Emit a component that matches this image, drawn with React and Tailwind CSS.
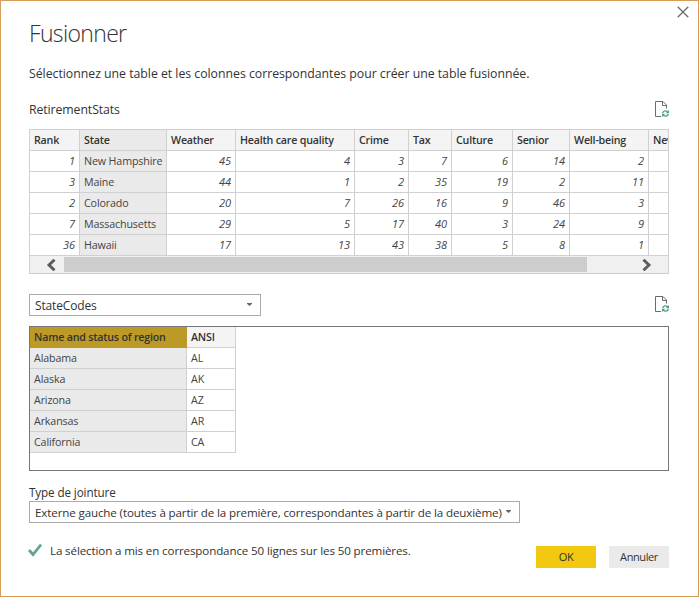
const stats = [
  ['1', 'New Hampshire', '45', '4', '3', '7', '6', '14', '2', ''],
  ['3', 'Maine', '44', '1', '2', '35', '19', '2', '11', ''],
  ['2', 'Colorado', '20', '7', '26', '16', '9', '46', '3', ''],
  ['7', 'Massachusetts', '29', '5', '17', '40', '3', '24', '9', ''],
  ['36', 'Hawaii', '17', '13', '43', '38', '5', '8', '1', ''],
];

const columns = [
  { name: 'Rank', width: 'w-[50px]' },
  { name: 'State', width: 'w-[87px]', selected: true },
  { name: 'Weather', width: 'w-[69px]' },
  { name: 'Health care quality', width: 'w-[119px]' },
  { name: 'Crime', width: 'w-[54px]' },
  { name: 'Tax', width: 'w-[43px]' },
  { name: 'Culture', width: 'w-[61px]' },
  { name: 'Senior', width: 'w-[57px]' },
  { name: 'Well-being', width: 'w-[79px]' },
  { name: 'New', width: 'w-[40px]' },
];

const codes = [
  ['Alabama', 'AL'],
  ['Alaska', 'AK'],
  ['Arizona', 'AZ'],
  ['Arkansas', 'AR'],
  ['California', 'CA'],
];

const cell = 'h-[21px] shrink-0 border-r border-b border-[#d0d0d0] px-1 leading-[20px] whitespace-nowrap';
const heading = 'text-[10.7px] font-semibold tracking-[-0.21px] text-[#333]';
const label = 'text-[10.7px] tracking-[-0.13px]';

function RefreshFileIcon() {
  return (
    <svg width="15" height="17" viewBox="0 0 15 17" fill="none" className="block">
      <path d="M6 15.5H.5V.5H8l3.500 3.500v3.500M7.500.5v4h4" stroke="#6b6b6b" />
      <path d="M7.700 12c.5-2.300 3.600-2.900 5-1M13.300 13c-.5 2.300-3.600 2.900-5 1" stroke="#52a184" strokeWidth="1.400" />
      <path d="M14 9v3.200h-3.200zM7 16v-3.200h3.200z" fill="#52a184" />
    </svg>
  );
}

function Caret() {
  return (
    <svg width="5" height="3" viewBox="0 0 5 3" className="mb-px block">
      <path d="M0 0h5v.8L2.500 3 0 .8z" fill="#666" />
    </svg>
  );
}

export default function App() {
  return (
    <div className="flex h-[597px] w-[699px] flex-col overflow-hidden border border-[#d59c5b] bg-white font-['Open_Sans',sans-serif] text-[#333]">
      <div className="flex h-[128px] shrink-0 flex-col pl-7">
        <div className="flex h-[57px] items-start justify-between">
          <h1 className="mt-[14px] text-[23px] leading-[36px] font-light tracking-[-0.65px]">Fusionner</h1>
          <svg width="12" height="12" viewBox="0 0 12 12" className="mt-[5px] mr-[9px]">
            <path d="M.7.7l10.600 10.600M11.300.7L.7 11.300" stroke="#6b6b6b" strokeWidth="1.300" />
          </svg>
        </div>
        <p className="mt-[6px] text-[12.300px] leading-[20px] whitespace-nowrap tracking-[-0.025px]">
          Sélectionnez une table et les colonnes correspondantes pour créer une table fusionnée.
        </p>
        <div className="mt-[16px] flex items-start justify-between pr-[28px]">
          <span className="text-[12.300px] leading-[20px] tracking-[-0.1px]">RetirementStats</span>
          <span className="mt-px"><RefreshFileIcon /></span>
        </div>
      </div>

      <div className="ml-7 h-[145px] w-[640px] shrink-0 overflow-hidden border border-[#d0d0d0] text-[#444]">
        <div className="flex">
          {columns.map((c) => (
            <div key={c.name} className={`${cell} ${heading} ${c.width} ${c.selected ? 'bg-[#eaeaea]' : 'bg-[#f4f4f4]'}`}>
              {c.name}
            </div>
          ))}
        </div>
        {stats.map((row) => (
          <div key={row[0]} className="flex">
            {row.map((v, i) => (
              <div key={i} className={`${cell} ${columns[i].width} ${i === 1 ? 'bg-[#eaeaea] text-[10.7px] tracking-[-0.13px]' : 'text-right text-[11px] italic'}`}>
                {v}
              </div>
            ))}
          </div>
        ))}
        <div className="flex h-[17px] items-center bg-[#f0f0f0]">
          <svg width="10" height="12" viewBox="0 0 10 12" className="ml-[16px]">
            <path d="M8.500.7L3 6l5.500 5.300" fill="none" stroke="#5c5c5c" strokeWidth="2.900" />
          </svg>
          <div className="ml-[8px] h-[15px] w-[523px] bg-[#cdcdcd]" />
          <svg width="10" height="12" viewBox="0 0 10 12" className="ml-[55px]">
            <path d="M1.500.7L7 6l-5.500 5.300" fill="none" stroke="#5c5c5c" strokeWidth="2.900" />
          </svg>
        </div>
      </div>

      <div className="mt-[20px] flex h-[22px] w-[668px] shrink-0 items-start justify-between pl-7">
        <div className="flex h-[22px] w-[232px] items-center justify-between border border-[#ababab] pr-[8px] pl-[5px]">
          <span className="pt-[2px] text-[12px] leading-[20px] tracking-[-0.15px]">StateCodes</span>
          <Caret />
        </div>
        <span className="mt-[2px] -mr-px"><RefreshFileIcon /></span>
      </div>

      <div className="mt-[10px] ml-7 h-[145px] w-[640px] shrink-0 border border-[#767676] text-[#444]">
        <div className="flex">
          <div className={`${heading} h-[21px] w-[157px] border-r border-b border-[#bd9a25] bg-[#bd9a25] px-1 leading-[20px] whitespace-nowrap`}>
            Name and status of region
          </div>
          <div className={`${cell} ${heading} w-[49px] bg-[#f4f4f4]`}>ANSI</div>
        </div>
        {codes.map(([name, code]) => (
          <div key={code} className="flex">
            <div className={`${cell} ${label} w-[157px] bg-[#eaeaea]`}>{name}</div>
            <div className={`${cell} ${label} w-[49px]`}>{code}</div>
          </div>
        ))}
      </div>

      <label className="mt-[11px] ml-7 h-[19px] shrink-0 text-[11.7px] leading-[20px] tracking-[-0.12px]">Type de jointure</label>
      <div className="ml-7 flex h-[22px] w-[491px] shrink-0 items-center justify-between border border-[#ababab] pr-[8px] pl-[5px]">
        <span className="pt-[2px] text-[11.6px] leading-[20px] whitespace-nowrap tracking-[-0.13px]">
          Externe gauche (toutes à partir de la première, correspondantes à partir de la deuxième)
        </span>
        <Caret />
      </div>

      <div className="mt-[17px] flex w-[668px] shrink-0 items-start pl-[27px]">
        <svg width="14" height="14" viewBox="0 0 14 14" className="mt-[3px]">
          <path d="M1 7l4 4.500L13 1.500" fill="none" stroke="#63a58d" strokeWidth="2.800" />
        </svg>
        <span className="mt-px ml-[8px] text-[11.6px] leading-[20px] whitespace-nowrap tracking-[-0.13px]">
          La sélection a mis en correspondance 50 lignes sur les 50 premières.
        </span>
        <div className="mt-[6px] ml-auto flex gap-[13px] text-[11px] leading-[22px] tracking-[-0.4px]">
          <button className="h-[22px] w-[60px] bg-[#f2c811]">OK</button>
          <button className="h-[22px] w-[60px] bg-[#eaeaea]">Annuler</button>
        </div>
      </div>
    </div>
  );
}
